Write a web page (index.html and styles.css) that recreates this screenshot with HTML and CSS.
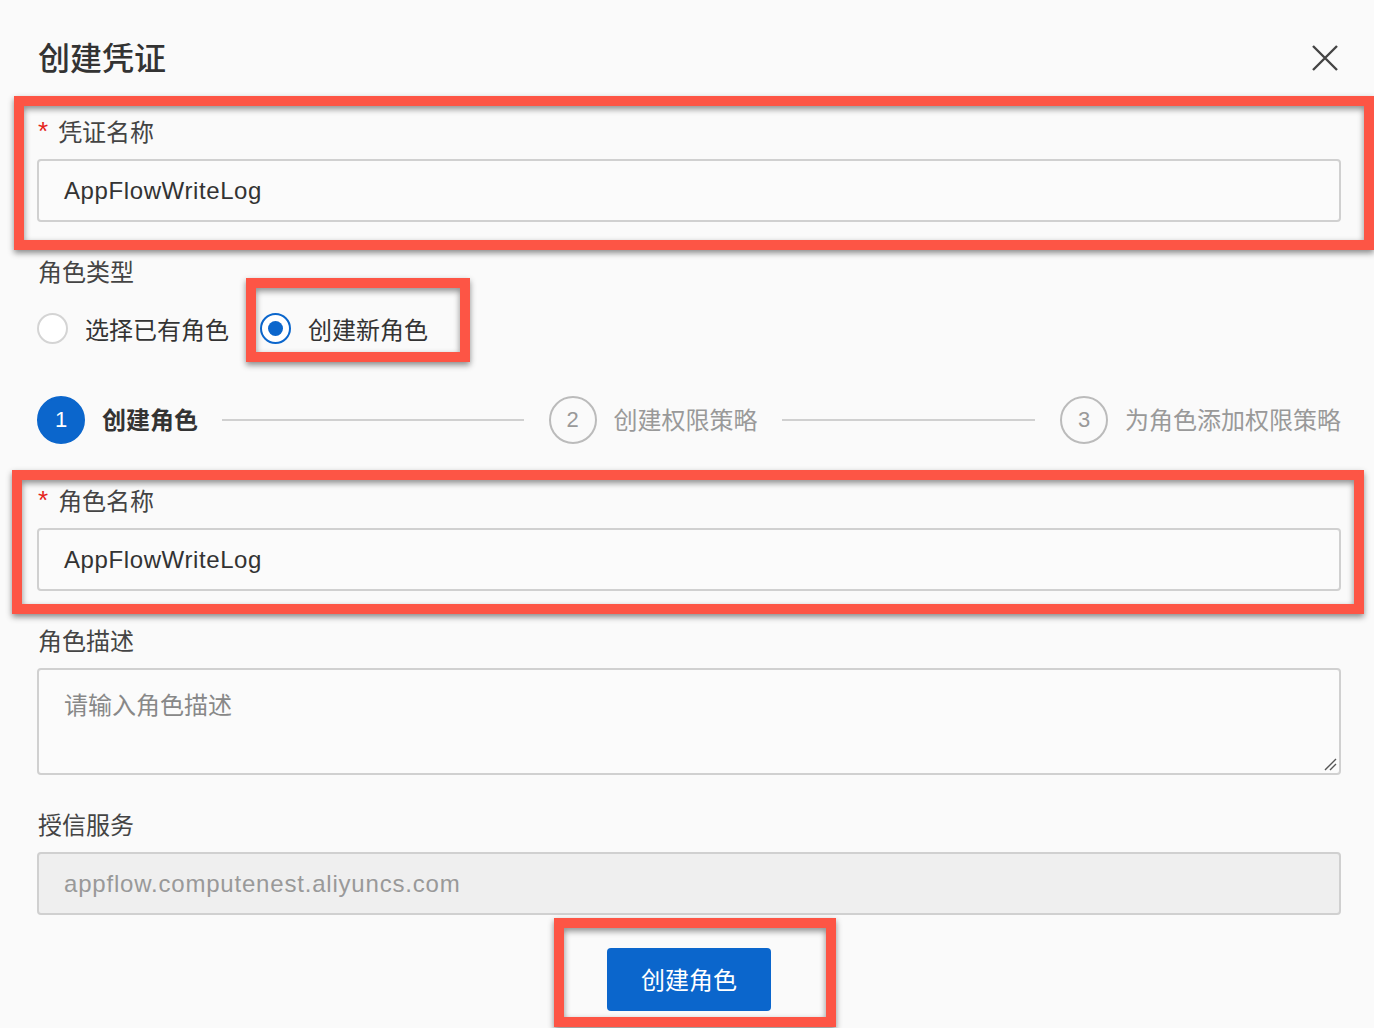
FILE: index.html
```html
<!DOCTYPE html>
<html lang="zh-CN">
<head>
    <meta charset="UTF-8">
    <title>创建凭证</title>
    <link rel="stylesheet" href="styles.css">
</head>
<body>

<div class="dialog">
    <header class="dialog-header">
        <h1>创建凭证</h1>
        <button class="close-btn" aria-label="关闭">
            <svg width="26" height="26" viewBox="0 0 26 26">
                <path d="M1 1 L25 25 M25 1 L1 25" stroke="#444" stroke-width="2.4" fill="none"/>
            </svg>
        </button>
    </header>

    <div class="field first">
        <label class="required">凭证名称</label>
        <div class="input">AppFlowWriteLog</div>
    </div>

    <div class="field">
        <label>角色类型</label>
        <div class="radios">
            <span class="radio"><i class="dot"></i>选择已有角色</span>
            <span class="radio checked"><i class="dot"></i>创建新角色</span>
        </div>
    </div>

    <div class="steps">
        <div class="step active"><span class="num">1</span><span class="title">创建角色</span><span class="step-line"></span></div>
        <div class="step"><span class="num">2</span><span class="title">创建权限策略</span><span class="step-line"></span></div>
        <div class="step last"><span class="num">3</span><span class="title">为角色添加权限策略</span></div>
    </div>

    <div class="field role-name">
        <label class="required">角色名称</label>
        <div class="input">AppFlowWriteLog</div>
    </div>

    <div class="field">
        <label>角色描述</label>
        <div class="textarea">
            <span class="placeholder">请输入角色描述</span>
            <svg class="grip" width="14" height="14" viewBox="0 0 14 14">
                <path d="M13 2 L2 13 M13 7 L7 13" stroke="#555" stroke-width="1.4"/>
            </svg>
        </div>
    </div>

    <div class="field">
        <label>授信服务</label>
        <div class="input disabled">appflow.computenest.aliyuncs.com</div>
    </div>

    <div class="footer">
        <button class="primary">创建角色</button>
    </div>
</div>

<!-- annotation boxes drawn over the screenshot -->
<div class="mark mark-name"></div>
<div class="mark mark-radio"></div>
<div class="mark mark-role"></div>
<div class="mark mark-btn"></div>

</body>
</html>
```

FILE: styles.css
```css
/* Page */
body {
    margin: 0;
    background-color: #fafafa;
    font-family: "Liberation Sans", "Noto Sans CJK SC", sans-serif;
    color: #333;
    width: 1374px;
    height: 1028px;
    overflow: hidden;
    position: relative;
}

.dialog {
    padding: 0 33px 0 37px;
}

/* Header */
.dialog-header {
    display: flex;
    justify-content: space-between;
    align-items: center;
    padding-top: 36px;
    height: 44px;
}

.dialog-header h1 {
    margin: 0;
    font-family: "Noto Sans CJK SC", sans-serif;
    font-size: 32px;
    font-weight: 500;
    line-height: 40px;
    height: 44px;
    color: #333;
    padding-left: 1px;
}

.close-btn {
    background: none;
    border: none;
    padding: 0;
    margin-right: 3px;
    width: 26px;
    height: 26px;
}

/* Fields */
.field {
    margin-top: 36px;
}

.field.first {
    margin-top: 38px;
}

.field.role-name {
    margin-top: 43px;
}

.field label {
    display: flex;
    align-items: center;
    height: 30px;
    padding-bottom: 3px;
    margin-top: -3px;
    font-family: "Noto Sans CJK SC", sans-serif;
    font-size: 24px;
    color: #444;
    padding-left: 1px;
}

.field label.required::before {
    content: "*";
    color: #e5231b;
    font-family: "Liberation Sans", sans-serif;
    font-size: 26px;
    margin-right: 10px;
    position: relative;
    top: 1px;
}

.input {
    margin-top: 11px;
    height: 63px;
    box-sizing: border-box;
    border: 2px solid #d0d0d0;
    border-radius: 4px;
    background: #fbfbfb;
    padding: 0 25px;
    display: flex;
    align-items: center;
    font-size: 24px;
    letter-spacing: 0.6px;
    color: #333;
}

.input.disabled {
    background: #efefef;
    color: #999;
    letter-spacing: 0.8px;
}

.textarea {
    margin-top: 11px;
    height: 107px;
    box-sizing: border-box;
    border: 2px solid #d0d0d0;
    border-radius: 4px;
    background: #fbfbfb;
    padding: 18px 25px;
    position: relative;
}

.placeholder {
    display: block;
    font-family: "Noto Sans CJK SC", sans-serif;
    font-size: 24px;
    line-height: 32px;
    height: 32px;
    color: #888;
}

.grip {
    position: absolute;
    right: 2px;
    bottom: 2px;
}

/* Radios */
.radios {
    display: flex;
    align-items: center;
    margin-top: 20px;
    height: 40px;
    gap: 31px;
}

.radio {
    display: flex;
    align-items: center;
    font-family: "Noto Sans CJK SC", sans-serif;
    font-size: 24px;
    color: #333;
}

.radio .dot {
    width: 31px;
    height: 31px;
    box-sizing: border-box;
    border: 2px solid #d4d4d4;
    border-radius: 50%;
    margin-right: 17px;
    background: #fff;
    position: relative;
}

.radio.checked .dot {
    border-color: #0b66cc;
}

.radio.checked .dot::after {
    content: "";
    position: absolute;
    left: 6px;
    top: 6px;
    width: 15px;
    height: 15px;
    border-radius: 50%;
    background: #0b66cc;
}

/* Steps */
.steps {
    display: flex;
    align-items: center;
    margin-top: 48px;
    height: 48px;
}

.step {
    flex: 1;
    display: flex;
    align-items: center;
    font-family: "Noto Sans CJK SC", sans-serif;
    font-size: 24px;
    color: #999;
    white-space: nowrap;
}

.step .title {
    padding-bottom: 3px;
}

.step.last {
    flex: none;
}

.step .num {
    flex: none;
    width: 48px;
    height: 48px;
    box-sizing: border-box;
    border: 2px solid #bbb;
    border-radius: 50%;
    display: flex;
    align-items: center;
    justify-content: center;
    font-family: "Liberation Sans", sans-serif;
    font-size: 22px;
    font-weight: 400;
    color: #999;
    margin-right: 17px;
}

.step.active {
    color: #333;
    font-weight: 700;
}

.step.active .num {
    background: #0b66cc;
    border-color: #0b66cc;
    color: #fff;
}

.step-line {
    flex: 1;
    height: 2px;
    background: #d0d0d0;
    margin: 0 25px 0 24px;
}

/* Footer */
.footer {
    display: flex;
    justify-content: center;
    margin-top: 33px;
}

.primary {
    width: 164px;
    height: 63px;
    border: none;
    border-radius: 4px;
    background: #0b66cc;
    color: #fff;
    font-family: "Noto Sans CJK SC", sans-serif;
    font-size: 24px;
    padding-bottom: 3px;
}

/* Annotation boxes */
.mark {
    position: absolute;
    border: 10px solid #fd5545;
    box-shadow: 0 3px 6px rgba(0, 0, 0, 0.45), inset 0 3px 6px rgba(0, 0, 0, 0.45);
}

.mark-name {
    left: 14px;
    top: 96px;
    width: 1340px;
    height: 134px;
}

.mark-radio {
    left: 246px;
    top: 278px;
    width: 204px;
    height: 64px;
}

.mark-role {
    left: 12px;
    top: 470px;
    width: 1332px;
    height: 124px;
}

.mark-btn {
    left: 554px;
    top: 918px;
    width: 262px;
    height: 89px;
}
```
